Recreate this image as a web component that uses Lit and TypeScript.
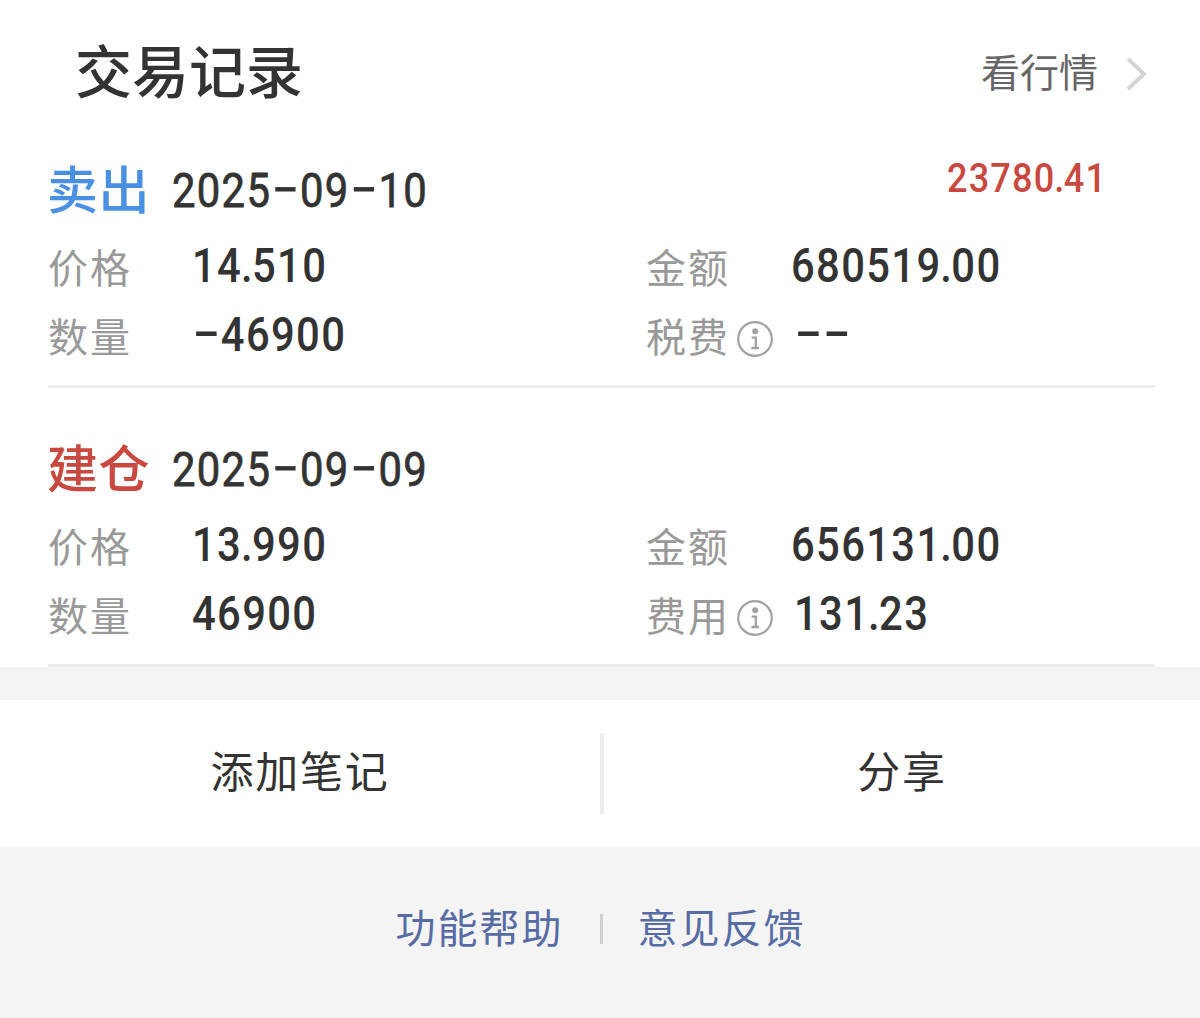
import { LitElement, html, css, svg, nothing } from 'lit';
import { customElement, property } from 'lit/decorators.js';

interface TradeRecord {
    kind: 'sell' | 'buy';
    action: string;
    date: string;
    profit?: string;
    price: string;
    amount: string;
    quantity: string;
    feeLabel: string;
    fee: string;
}

const RECORDS: TradeRecord[] = [
    {
        kind: 'sell',
        action: '卖出',
        date: '2025-09-10',
        profit: '23780.41',
        price: '14.510',
        amount: '680519.00',
        quantity: '-46900',
        feeLabel: '税费',
        fee: '--',
    },
    {
        kind: 'buy',
        action: '建仓',
        date: '2025-09-09',
        price: '13.990',
        amount: '656131.00',
        quantity: '46900',
        feeLabel: '费用',
        fee: '131.23',
    },
];

const infoIcon = svg`
    <circle cx="18" cy="18" r="16.8" fill="none" stroke="#a2a2a2" stroke-width="2.2" />
    <circle cx="18.2" cy="10.3" r="3" fill="#a2a2a2" />
    <path d="M14.6 16.6H18.8V27M14.4 27H22" fill="none" stroke="#a2a2a2" stroke-width="2.3" />
`;

// narrow digits, with dashes almost as wide as a digit
@customElement('number-text')
class NumberText extends LitElement {
    static styles = [
        css`
            :host {
                display: inline-block;
                font-family: Roboto, 'Liberation Sans', sans-serif;
                letter-spacing: 0.032em;
                line-height: 1;
                white-space: nowrap;
                transform: scaleX(0.87);
                transform-origin: left center;
            }
            .dash {
                display: inline-block;
                width: 0.69em;
                text-align: center;
                letter-spacing: 0;
                transform: translateY(-0.07em) scaleX(1.9);
            }
            .point {
                margin: 0 -0.045em 0 -0.03em;
            }
        `
    ];

    @property() value = '';

    renderChar(c: string) {
        if (c === '-') {
            return html`<span class='dash'>-</span>`;
        }
        return c === '.' ? html`<span class='point'>.</span>` : c;
    }

    render() {
        return html`${[...this.value].map(c => this.renderChar(c))}`;
    }
}

@customElement('trade-record')
class TradeRecordItem extends LitElement {
    static styles = [
        css`
            :host {
                display: block;
                box-sizing: border-box;
                height: 279px;
                margin: 0 45px 0 48px;
                padding-top: 44px;
                border-bottom: 3px solid #eeeeee;
            }
            .head {
                display: flex;
                height: 78px;
            }
            .action {
                width: 125px;
                margin-left: -1px;
                font-size: 51px;
                line-height: 68px;
                font-weight: 500;
                letter-spacing: 0.5px;
            }
            .sell {
                color: #4a90e2;
            }
            .buy {
                color: #c9483f;
            }
            .date {
                margin-top: 14px;
                font-size: 48px;
                font-weight: 400;
                -webkit-text-stroke: 0.8px;
            }
            .profit {
                margin: 4px 48px 0 auto;
                font-size: 41.5px;
                font-weight: 500;
                color: #c9483f;
                transform-origin: right center;
            }
            .grid {
                display: grid;
                grid-template-columns: 144px 454px 145px 1fr;
                grid-auto-rows: 69px;
                align-items: center;
            }
            .label {
                display: flex;
                align-items: center;
                gap: 7px;
                font-size: 40px;
                line-height: 60px;
                letter-spacing: 2px;
                color: #999999;
            }
            .info {
                width: 36px;
                height: 36px;
                margin-top: 8px;
            }
            .number {
                font-size: 48px;
                font-weight: 500;
                justify-self: start;
            }
            .fee {
                margin-left: 3px;
            }
        `
    ];

    @property({ attribute: false }) record!: TradeRecord;

    render() {
        const r = this.record;
        return html`
            <div class='head'>
                <span class='action ${r.kind}'>${r.action}</span>
                <number-text class='date' .value=${r.date}></number-text>
                ${r.profit ? html`<number-text class='profit' .value=${r.profit}></number-text>` : nothing}
            </div>
            <div class='grid'>
                <span class='label'>价格</span>
                <number-text class='number' .value=${r.price}></number-text>
                <span class='label'>金额</span>
                <number-text class='number' .value=${r.amount}></number-text>
                <span class='label'>数量</span>
                <number-text class='number' .value=${r.quantity}></number-text>
                <span class='label'>${r.feeLabel}<svg class='info' viewBox='0 0 36 36'>${infoIcon}</svg></span>
                <number-text class='number fee' .value=${r.fee}></number-text>
            </div>
        `;
    }
}

@customElement('app-root')
class AppRoot extends LitElement {
    static styles = [
        css`
            :host {
                display: block;
                height: 1018px;
                overflow: hidden;
                background: #f4f4f4;
                color: #333333;
                font-family: 'Noto Sans CJK SC', 'Liberation Sans', sans-serif;
            }
            .records {
                background: #ffffff;
            }
            .header {
                display: flex;
                align-items: center;
                justify-content: space-between;
                height: 109px;
                box-sizing: border-box;
                padding: 30px 53px 0 75px;
            }
            .title {
                margin-top: -4px;
                font-size: 57px;
                line-height: 76px;
                font-weight: 500;
            }
            .more {
                display: flex;
                align-items: center;
                gap: 28px;
                font-size: 39px;
                line-height: 60px;
                color: #666666;
            }
            .chevron {
                width: 21px;
                height: 36px;
                margin-top: 9px;
            }
            .actions {
                display: grid;
                grid-template-columns: 600px 4px 596px;
                align-items: center;
                height: 147px;
                margin-top: 33px;
                background: #ffffff;
            }
            .action {
                padding-bottom: 10px;
                text-align: center;
                font-size: 43px;
                line-height: 64px;
                letter-spacing: 1.7px;
            }
            .divider {
                height: 81px;
                background: #eeeeee;
            }
            .footer {
                display: flex;
                align-items: center;
                justify-content: center;
                height: 162px;
                padding-left: 1px;
                font-size: 40px;
                line-height: 60px;
                letter-spacing: 2px;
                color: #576ba5;
            }
            .link {
                margin-top: -4px;
            }
            .bar {
                width: 3px;
                height: 30px;
                margin: 2px 35px 0 36px;
                background: #d0d0d0;
            }
        `
    ];

    render() {
        return html`
            <div class='records'>
                <div class='header'>
                    <span class='title'>交易记录</span>
                    <span class='more'>
                        看行情
                        <svg class='chevron' viewBox='0 0 21 36'>
                            <path d='M2 3L18 18L2 33' fill='none' stroke='#d4d4d4' stroke-width='4' />
                        </svg>
                    </span>
                </div>
                ${RECORDS.map(r => html`<trade-record .record=${r}></trade-record>`)}
            </div>
            <div class='actions'>
                <span class='action'>添加笔记</span>
                <span class='divider'></span>
                <span class='action'>分享</span>
            </div>
            <div class='footer'>
                <span class='link'>功能帮助</span>
                <span class='bar'></span>
                <span class='link'>意见反馈</span>
            </div>
        `;
    }
}
